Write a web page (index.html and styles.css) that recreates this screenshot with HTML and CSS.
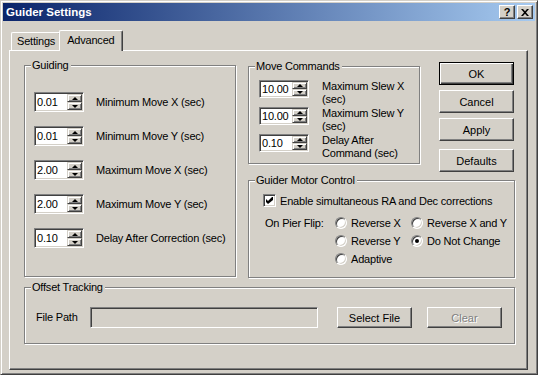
FILE: index.html
```html
<!DOCTYPE html>
<html lang="en">
<head>
    <meta charset="UTF-8">
    <title>Guider Settings</title>
    <link rel="stylesheet" href="styles.css">
</head>
<body>

    <div class="window">
        <div class="titlebar">
            <span class="title">Guider Settings</span>
            <div class="caption-buttons">
                <span class="cap-btn help">?</span>
                <span class="cap-btn">
                    <svg width="8" height="7" viewBox="0 0 8 7"><path d="M0 0h2l2 2.2L6 0h2L5 3.5 8 7H6L4 4.8 2 7H0l3-3.5z" fill="#000"/></svg>
                </span>
            </div>
        </div>

        <div class="client">
            <div class="tabs">
                <div class="tab">Settings</div>
                <div class="tab active">Advanced</div>
            </div>

            <div class="panel">
                <div class="top">
                    <!-- Guiding -->
                    <div class="group guiding">
                        <span class="group-title">Guiding</span>
                        <div class="row">
                            <div class="spin"><span class="spin-value">0.01</span><span class="spin-btns"><span class="up"></span><span class="down"></span></span></div>
                            <span>Minimum Move X (sec)</span>
                        </div>
                        <div class="row">
                            <div class="spin"><span class="spin-value">0.01</span><span class="spin-btns"><span class="up"></span><span class="down"></span></span></div>
                            <span>Minimum Move Y (sec)</span>
                        </div>
                        <div class="row">
                            <div class="spin"><span class="spin-value">2.00</span><span class="spin-btns"><span class="up"></span><span class="down"></span></span></div>
                            <span>Maximum Move X (sec)</span>
                        </div>
                        <div class="row">
                            <div class="spin"><span class="spin-value">2.00</span><span class="spin-btns"><span class="up"></span><span class="down"></span></span></div>
                            <span>Maximum Move Y (sec)</span>
                        </div>
                        <div class="row">
                            <div class="spin"><span class="spin-value">0.10</span><span class="spin-btns"><span class="up"></span><span class="down"></span></span></div>
                            <span>Delay After Correction (sec)</span>
                        </div>
                    </div>

                    <div class="right-col">
                        <div class="top-right">
                            <!-- Move Commands -->
                            <div class="group move">
                                <span class="group-title">Move Commands</span>
                                <div class="move-row">
                                    <div class="spin small"><span class="spin-value">10.00</span><span class="spin-btns"><span class="up"></span><span class="down"></span></span></div>
                                    <span class="two-line">Maximum Slew X<br>(sec)</span>
                                </div>
                                <div class="move-row">
                                    <div class="spin small"><span class="spin-value">10.00</span><span class="spin-btns"><span class="up"></span><span class="down"></span></span></div>
                                    <span class="two-line">Maximum Slew Y<br>(sec)</span>
                                </div>
                                <div class="move-row">
                                    <div class="spin small"><span class="spin-value">0.10</span><span class="spin-btns"><span class="up"></span><span class="down"></span></span></div>
                                    <span class="two-line">Delay After<br>Command (sec)</span>
                                </div>
                            </div>

                            <div class="buttons">
                                <button class="btn default">OK</button>
                                <button class="btn">Cancel</button>
                                <button class="btn">Apply</button>
                                <button class="btn defaults">Defaults</button>
                            </div>
                        </div>

                        <!-- Guider Motor Control -->
                        <div class="group motor">
                            <span class="group-title">Guider Motor Control</span>
                            <div class="check-row">
                                <span class="checkbox">
                                    <svg width="7" height="7" viewBox="0 0 7 7"><path d="M0 2L2 4L6 0H7V3L2 7L0 5Z" fill="#000"/></svg>
                                </span>
                                <span>Enable simultaneous RA and Dec corrections</span>
                            </div>
                            <div class="flip">
                                <span>On Pier Flip:</span>
                                <span class="option"><span class="radio"></span>Reverse X</span>
                                <span class="option"><span class="radio"></span>Reverse X and Y</span>
                                <span></span>
                                <span class="option"><span class="radio"></span>Reverse Y</span>
                                <span class="option"><span class="radio checked"></span>Do Not Change</span>
                                <span></span>
                                <span class="option"><span class="radio"></span>Adaptive</span>
                            </div>
                        </div>
                    </div>
                </div>

                <!-- Offset Tracking -->
                <div class="group offset">
                    <span class="group-title">Offset Tracking</span>
                    <span class="offset-label">File Path</span>
                    <div class="path-field"></div>
                    <button class="btn short select">Select File</button>
                    <button class="btn short disabled">Clear</button>
                </div>
            </div>
        </div>
    </div>

</body>
</html>
```

FILE: styles.css
```css
body {
    margin: 0;
    background-color: #d4d0c8;
    font-family: "Liberation Sans", Arial, sans-serif;
    font-size: 11px;
    letter-spacing: -0.2px;
    color: #000;
}

.window {
    width: 538px;
    height: 375px;
    box-sizing: border-box;
    border: 1px solid;
    border-color: #d4d0c8 #404040 #404040 #d4d0c8;
    box-shadow: inset 1px 1px #fff, inset -1px -1px #808080;
    padding: 2px;
    display: flex;
    flex-direction: column;
}

/* title bar */

.titlebar {
    height: 18px;
    display: flex;
    align-items: center;
    justify-content: space-between;
    padding: 0 2px 0 3px;
    background: linear-gradient(to right, #0a246a, #a6caf0);
}

.title {
    color: #fff;
    font-weight: bold;
    font-size: 11.5px;
    letter-spacing: 0;
}

.caption-buttons {
    display: flex;
    gap: 2px;
}

.cap-btn {
    width: 16px;
    height: 14px;
    box-sizing: border-box;
    border: 1px solid;
    border-color: #fff #404040 #404040 #fff;
    box-shadow: inset -1px -1px #808080;
    background-color: #d4d0c8;
    display: flex;
    align-items: center;
    justify-content: center;
}

.cap-btn.help {
    font-weight: bold;
    font-size: 11px;
    line-height: 11px;
}

/* tabs */

.client {
    flex: 1;
    display: flex;
    flex-direction: column;
    padding: 9px 7px 2px 6px;
}

.tabs {
    display: flex;
    align-items: flex-end;
    height: 20px;
    padding-left: 2px;
}

.tab {
    height: 18px;
    box-sizing: border-box;
    padding: 1px 5px 0;
    line-height: 14px;
    border: 1px solid #fff;
    border-right-color: #404040;
    border-bottom: none;
    border-radius: 2px 2px 0 0;
    box-shadow: inset -1px 0 #808080;
}

.tab.active {
    height: 21px;
    margin: 0 -2px -1px;
    padding: 2px 8px 0 7px;
    position: relative;
    z-index: 1;
    background-color: #d4d0c8;
}

.panel {
    flex: 1;
    display: flex;
    flex-direction: column;
    gap: 9px;
    padding: 11px 12px 0 14px;
    border: 1px solid;
    border-color: #fff #404040 #404040 #fff;
    box-shadow: inset -1px -1px #808080;
}

.top {
    display: flex;
    align-items: flex-start;
    gap: 12px;
}

/* group boxes */

.group {
    position: relative;
    box-sizing: border-box;
    border: 1px solid #808080;
    box-shadow: inset 1px 1px #fff, 1px 1px #fff;
}

.group-title {
    position: absolute;
    top: -7px;
    left: 6px;
    padding: 0 2px 0 1px;
    line-height: 13px;
    background-color: #d4d0c8;
}

.guiding {
    width: 212px;
    height: 212px;
    margin-top: 3px;
    padding: 26px 0 0 9px;
    display: flex;
    flex-direction: column;
    gap: 14px;
}

.row {
    display: flex;
    align-items: center;
    gap: 12px;
}

/* spin boxes */

.spin {
    width: 50px;
    height: 20px;
    box-sizing: border-box;
    display: flex;
    padding: 1px;
    border: 1px solid;
    border-color: #808080 #fff #fff #808080;
    box-shadow: inset 1px 1px #404040, inset -1px -1px #d4d0c8;
    background-color: #fff;
}

.spin.small {
    height: 18px;
}

.spin-value {
    flex: 1;
    display: flex;
    align-items: center;
    padding-left: 1px;
}

.spin-btns {
    width: 15px;
    display: flex;
    flex-direction: column;
}

.spin-btns span {
    flex: 1;
    box-sizing: border-box;
    display: flex;
    align-items: center;
    justify-content: center;
    border: 1px solid;
    border-color: #d4d0c8 #404040 #404040 #d4d0c8;
    box-shadow: inset 1px 1px #fff, inset -1px -1px #808080;
    background-color: #d4d0c8;
}

.spin-btns .up::after,
.spin-btns .down::after {
    content: "";
    border-left: 3px solid transparent;
    border-right: 3px solid transparent;
}

.spin-btns .up::after {
    border-bottom: 3px solid #000;
}

.spin-btns .down::after {
    border-top: 3px solid #000;
}

/* move commands + buttons */

.right-col {
    width: 267px;
    display: flex;
    flex-direction: column;
    gap: 8px;
}

.top-right {
    display: flex;
    align-items: flex-start;
    justify-content: space-between;
}

.move {
    width: 172px;
    height: 98px;
    margin-top: 4px;
    padding: 13px 0 0 10px;
    display: flex;
    flex-direction: column;
    gap: 1px;
}

.move-row {
    display: flex;
    align-items: flex-start;
    gap: 13px;
}

.two-line {
    line-height: 13px;
}

.buttons {
    display: flex;
    flex-direction: column;
    gap: 5px;
    margin-right: 1px;
}

.btn {
    width: 75px;
    height: 23px;
    box-sizing: border-box;
    padding: 0;
    font: inherit;
    color: #000;
    border: 1px solid;
    border-color: #fff #404040 #404040 #fff;
    box-shadow: inset -1px -1px #808080;
    background-color: #d4d0c8;
}

.btn.default {
    border-color: #000;
    box-shadow: inset 1px 1px #fff, inset -1px -1px #404040, inset -2px -2px #808080;
}

.btn.defaults {
    margin-top: 3px;
}

.btn.short {
    height: 21px;
}

.btn.disabled {
    color: #808080;
    text-shadow: 1px 1px #fff;
}

/* motor control */

.motor {
    height: 98px;
    padding: 13px 0 0 14px;
}

.check-row {
    display: flex;
    align-items: center;
    gap: 4px;
    height: 13px;
}

.checkbox {
    width: 13px;
    height: 13px;
    box-sizing: border-box;
    display: flex;
    align-items: center;
    justify-content: center;
    border: 1px solid;
    border-color: #808080 #fff #fff #808080;
    box-shadow: inset 1px 1px #404040, inset -1px -1px #d4d0c8;
    background-color: #fff;
}

.flip {
    display: grid;
    grid-template-columns: 70px 76px auto;
    grid-auto-rows: 18px;
    align-items: center;
    margin: 7px 0 0 2px;
}

.option {
    display: flex;
    align-items: center;
    gap: 4px;
}

.radio {
    width: 12px;
    height: 12px;
    box-sizing: border-box;
    display: flex;
    align-items: center;
    justify-content: center;
    border-radius: 50%;
    border: 1px solid;
    border-color: #808080 #fff #fff #808080;
    box-shadow: inset 1px 1px #404040, inset -1px -1px #d4d0c8;
    background-color: #fff;
}

.radio.checked::after {
    content: "";
    width: 4px;
    height: 4px;
    border-radius: 50%;
    background-color: #000;
}

/* offset tracking */

.offset {
    height: 57px;
    display: flex;
    align-items: flex-start;
    padding: 19px 0 0 11px;
}

.offset-label {
    width: 54px;
    line-height: 21px;
}

.path-field {
    width: 228px;
    height: 21px;
    box-sizing: border-box;
    border: 1px solid;
    border-color: #808080 #fff #fff #808080;
    box-shadow: inset 1px 1px #404040, inset -1px -1px #d4d0c8;
    margin-right: 19px;
}

.btn.select {
    margin-right: 15px;
}
```
